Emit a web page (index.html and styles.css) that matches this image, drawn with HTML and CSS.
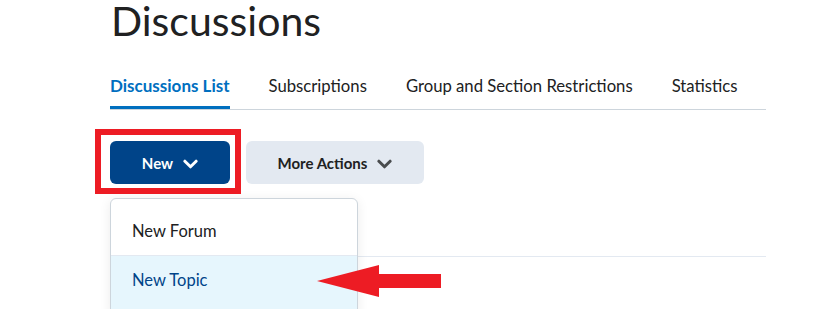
FILE: index.html
```html
<!DOCTYPE html>
<html>
<head>
<meta charset="utf-8">
<link rel="stylesheet" href="styles.css">
</head>
<body>
<div class="page">
  <h1 class="title">Discussions</h1>
  <nav class="tabs">
    <span class="tab active">Discussions List</span>
    <span class="tab">Subscriptions</span>
    <span class="tab">Group and Section Restrictions</span>
    <span class="tab">Statistics</span>
  </nav>
  <div class="actions">
    <button class="btn primary">New
      <svg class="chev" viewBox="0 0 16 10" width="15" height="10"><path d="M2 2 L8 8 L14 2" fill="none" stroke="currentColor" stroke-width="3.2" stroke-linecap="round" stroke-linejoin="round"/></svg>
    </button>
    <button class="btn secondary">More Actions
      <svg class="chev" viewBox="0 0 16 10" width="15" height="10"><path d="M2 2 L8 8 L14 2" fill="none" stroke="currentColor" stroke-width="3.2" stroke-linecap="round" stroke-linejoin="round"/></svg>
    </button>
  </div>
  <div class="listhead"></div>
  <div class="menu">
    <div class="item">New Forum</div>
    <div class="item hover">New Topic</div>
  </div>
  <div class="highlight-box"></div>
  <svg class="arrow" width="130" height="40" viewBox="312 262 130 40"><polygon points="317,281 379,265 379,274 441,274 441,288 379,288 379,297" fill="#ed1c24"/></svg>
</div>
</body>
</html>
```
FILE: styles.css
```css
html, body {
  margin: 0;
  padding: 0;
  background: #ffffff;
}
body {
  font-family: Lato, "Noto Sans", sans-serif;
  color: #202122;
  width: 813px;
  height: 309px;
  overflow: hidden;
}
.page {
  position: relative;
  padding-left: 110px;
  width: 656px;
}
.title {
  margin: 0;
  font-size: 41px;
  line-height: 42px;
  font-weight: 400;
  color: #202122;
  padding-left: 1px;
}
.tabs {
  display: flex;
  gap: 39px;
  margin-top: 34px;
  border-bottom: 1px solid #cdd5dc;
}
.tab {
  font-size: 16.7px;
  line-height: 20px;
  padding-bottom: 10px;
  border-bottom: 3px solid transparent;
  color: #202122;
}
.tab.active {
  font-size: 17px;
  color: #006fbf;
  font-weight: 700;
  border-bottom-color: #006fbf;
}
.actions {
  display: flex;
  gap: 16px;
  margin-top: 31px;
}
.btn {
  height: 43px;
  border: none;
  border-radius: 6px;
  font-family: Lato, "Noto Sans", sans-serif;
  font-size: 15px;
  font-weight: 700;
  display: flex;
  align-items: center;
  justify-content: center;
  gap: 10px;
  padding: 0;
}
.btn.primary {
  width: 120px;
  background: #004489;
  color: #ffffff;
}
.btn.secondary {
  width: 178px;
  background: #e3e9f1;
  color: #202122;
}
.btn.secondary .chev {
  color: #494c4e;
}
.chev {
  display: block;
  margin-top: 2px;
}
.listhead {
  height: 72px;
  border-bottom: 1px solid #e3e9f1;
}
.menu {
  position: absolute;
  left: 110px;
  top: 198px;
  width: 246px;
  padding-top: 8px;
  border: 1px solid #cdd5dc;
  border-radius: 6px;
  background: #ffffff;
  box-shadow: 0 2px 12px rgba(0, 0, 0, 0.08);
  overflow: hidden;
}
.item {
  height: 48px;
  padding-left: 21px;
  font-size: 16.5px;
  line-height: 48px;
  color: #202122;
}
.item + .item {
  height: 60px;
  border-top: 1px solid #e3e9f1;
}
.item.hover {
  background: #e6f6fd;
  color: #004489;
}
.highlight-box {
  position: absolute;
  left: 95px;
  top: 129px;
  width: 134px;
  height: 53px;
  border: 6px solid #ed1c24;
}
.arrow {
  position: absolute;
  left: 312px;
  top: 262px;
}
```
